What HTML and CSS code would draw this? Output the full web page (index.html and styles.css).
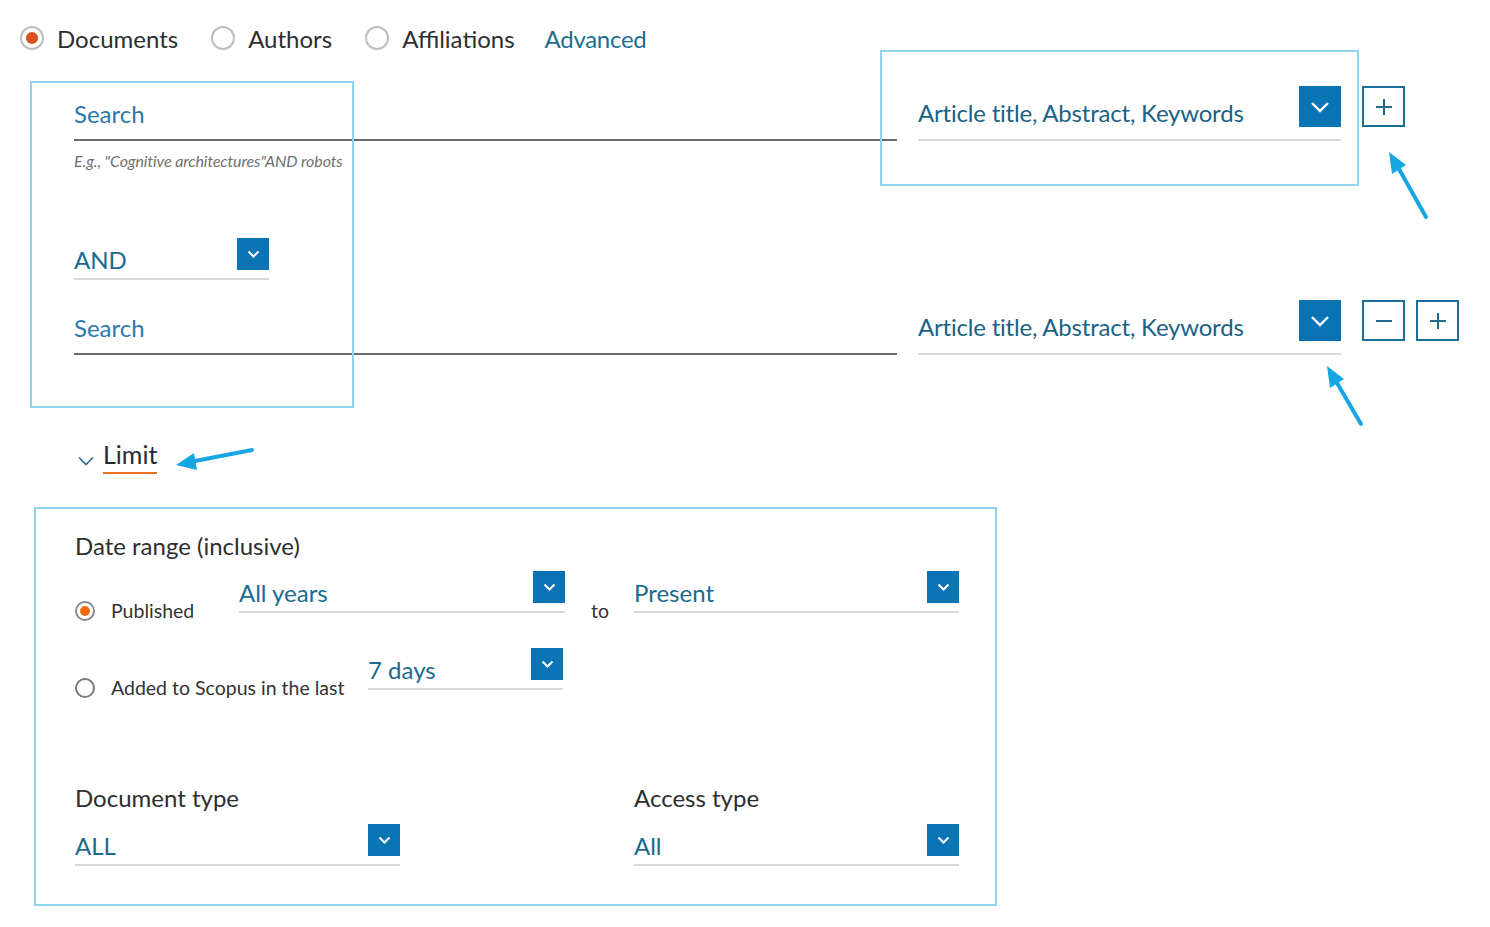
FILE: index.html
```html
<!DOCTYPE html>
<html lang="en">
<head>
  <meta charset="UTF-8">
  <title>Scopus - Document search</title>
  <link rel="stylesheet" href="styles.css">
</head>
<body>

<div class="page">
  <div class="nav">
    <label class="option"><span class="radio checked"></span>Documents</label>
    <label class="option"><span class="radio"></span>Authors</label>
    <label class="option"><span class="radio"></span>Affiliations</label>
    <a class="link">Advanced</a>
  </div>

  <div class="query">
    <div class="query-line">
      <div class="term">Search</div>
      <div class="select big field">
        <span class="value">Article title, Abstract, Keywords</span>
        <span class="caret"><svg width="20" height="12" viewBox="0 0 20 12"><polyline points="2,2 10,10 18,2"/></svg></span>
      </div>
      <div class="actions">
        <span class="btn"><svg width="18" height="18" viewBox="0 0 18 18"><path d="M9 1v16M1 9h16"/></svg></span>
      </div>
    </div>
    <div class="hint">E.g., "Cognitive architectures"AND robots</div>

    <div class="select small connector">
      <span class="value">AND</span>
      <span class="caret"><svg width="13" height="8" viewBox="0 0 13 8"><polyline points="1.5,1.5 6.5,6.5 11.5,1.5"/></svg></span>
    </div>

    <div class="query-line second">
      <div class="term">Search</div>
      <div class="select big field">
        <span class="value">Article title, Abstract, Keywords</span>
        <span class="caret"><svg width="20" height="12" viewBox="0 0 20 12"><polyline points="2,2 10,10 18,2"/></svg></span>
      </div>
      <div class="actions">
        <span class="btn"><svg width="18" height="18" viewBox="0 0 18 18"><path d="M1 9h16"/></svg></span>
        <span class="btn"><svg width="18" height="18" viewBox="0 0 18 18"><path d="M9 1v16M1 9h16"/></svg></span>
      </div>
    </div>
  </div>

  <div class="limit-toggle">
    <svg width="16" height="10" viewBox="0 0 16 10"><polyline points="1,1.5 8,8.5 15,1.5"/></svg>
    <span class="limit-label">Limit</span>
  </div>

  <div class="panel">
    <div class="panel-title">Date range (inclusive)</div>

    <div class="date-row">
      <label class="choice published"><span class="radio sm checked"></span>Published</label>
      <div class="select small w326">
        <span class="value">All years</span>
        <span class="caret"><svg width="13" height="8" viewBox="0 0 13 8"><polyline points="1.5,1.5 6.5,6.5 11.5,1.5"/></svg></span>
      </div>
      <span class="to">to</span>
      <div class="select small w325">
        <span class="value">Present</span>
        <span class="caret"><svg width="13" height="8" viewBox="0 0 13 8"><polyline points="1.5,1.5 6.5,6.5 11.5,1.5"/></svg></span>
      </div>
    </div>

    <div class="date-row added">
      <label class="choice last"><span class="radio sm"></span>Added to Scopus in the last</label>
      <div class="select small w195">
        <span class="value">7 days</span>
        <span class="caret"><svg width="13" height="8" viewBox="0 0 13 8"><polyline points="1.5,1.5 6.5,6.5 11.5,1.5"/></svg></span>
      </div>
    </div>

    <div class="type-grid">
      <div>
        <div class="panel-title">Document type</div>
        <div class="select small w325 typed">
          <span class="value">ALL</span>
          <span class="caret"><svg width="13" height="8" viewBox="0 0 13 8"><polyline points="1.5,1.5 6.5,6.5 11.5,1.5"/></svg></span>
        </div>
      </div>
      <div>
        <div class="panel-title">Access type</div>
        <div class="select small w325 typed">
          <span class="value">All</span>
          <span class="caret"><svg width="13" height="8" viewBox="0 0 13 8"><polyline points="1.5,1.5 6.5,6.5 11.5,1.5"/></svg></span>
        </div>
      </div>
    </div>
  </div>

  <!-- annotation marks drawn over the form -->
  <div class="mark mark-terms"></div>
  <div class="mark mark-field"></div>
  <svg class="arrows" width="1490" height="927" viewBox="0 0 1490 927">
    <line x1="1426" y1="217" x2="1399" y2="169"/>
    <polygon points="1389,152 1406,165 1392,174"/>
    <line x1="1361" y1="424" x2="1337" y2="383"/>
    <polygon points="1327,366 1344,379 1330,388"/>
    <line x1="252" y1="450" x2="195" y2="461"/>
    <polygon points="176,465 194,453 197,470"/>
  </svg>
</div>

</body>
</html>
```

FILE: styles.css
```css
body {
  margin: 0;
  font-family: 'Lato', 'Open Sans', sans-serif;
  color: #2e2e2e;
  background: white;
}
.page {
  position: relative;
  width: 1490px;
  height: 927px;
  overflow: hidden;
}
.nav {
  display: flex;
  align-items: center;
  height: 26px;
  margin: 25px 0 0 20px;
  font-size: 24px;
}
.option {
  display: flex;
  align-items: center;
  gap: 13px;
  margin-right: 33px;
}
.link {
  color: #1f6f92;
  margin-left: -3px;
  letter-spacing: -0.3px;
}
.radio {
  width: 24px;
  height: 24px;
  box-sizing: border-box;
  border: 2px solid #bdbdbd;
  border-radius: 50%;
  display: flex;
  align-items: center;
  justify-content: center;
}
.radio.checked::after {
  content: '';
  width: 12px;
  height: 12px;
  border-radius: 50%;
  background: #d9511c;
}
.radio.sm {
  width: 20px;
  height: 20px;
  border-color: #7a7a7a;
}
.radio.sm.checked {
  border-color: #8a8a8a;
}
.radio.sm.checked::after {
  width: 10px;
  height: 10px;
  background: #f26c0d;
}

.query {
  margin-left: 74px;
}
.query-line {
  display: flex;
  align-items: flex-end;
  margin-top: 35px;
}
.query-line.second {
  margin-top: 20px;
}
.term {
  width: 823px;
  font-size: 24px;
  line-height: 30px;
  padding-bottom: 10px;
  border-bottom: 2px solid #6b6b6b;
  color: #2b79ad;
}
.hint {
  margin-top: 10px;
  font-size: 16px;
  line-height: 20px;
  font-style: italic;
  color: #707070;
  letter-spacing: -0.1px;
}

.select {
  display: flex;
  align-items: flex-end;
  justify-content: space-between;
  box-sizing: border-box;
  border-bottom: 2px solid #d9d9d9;
}
.select .value {
  font-size: 24px;
  line-height: 30px;
  color: #1b6a8f;
  white-space: nowrap;
}
.field .value {
  color: #1a6284;
  letter-spacing: -0.2px;
}
.caret {
  display: flex;
  align-items: center;
  justify-content: center;
  background: #0b74b4;
}
.caret svg {
  fill: none;
  stroke: white;
  stroke-width: 2.4;
}
.select.big {
  padding-bottom: 11px;
}
.select.big .caret {
  width: 42px;
  height: 41px;
  margin-bottom: 1px;
}
.select.small {
  padding-bottom: 3px;
}
.select.small .caret {
  width: 32px;
  height: 32px;
  margin-bottom: 5px;
}
.select.small .caret svg {
  stroke-width: 2;
}
.field {
  width: 423px;
  margin-left: 21px;
}
.actions {
  display: flex;
  gap: 11px;
  margin-left: 21px;
  margin-bottom: 14px;
}
.btn {
  width: 43px;
  height: 41px;
  box-sizing: border-box;
  border: 2px solid #1c6f99;
  display: flex;
  align-items: center;
  justify-content: center;
}
.btn svg {
  fill: none;
  stroke: #24698b;
  stroke-width: 2;
}
.connector {
  width: 195px;
  margin-top: 67px;
}

.limit-toggle {
  display: flex;
  align-items: center;
  gap: 9px;
  margin: 86px 0 0 78px;
}
.limit-toggle svg {
  fill: none;
  stroke: #2a6a95;
  stroke-width: 1.6;
  margin-top: 6px;
}
.limit-label {
  font-size: 25px;
  line-height: 26px;
  padding-bottom: 5px;
  border-bottom: 2px solid #e8701a;
  color: #262b33;
}

.panel {
  width: 963px;
  box-sizing: border-box;
  margin: 33px 0 0 34px;
  padding: 22px 0 38px 39px;
  border: 2px solid #8fd3ee;
}
.panel-title {
  font-size: 24px;
  line-height: 30px;
  color: #2e2e2e;
}
.date-row {
  display: flex;
  align-items: flex-start;
  margin-top: 10px;
}
.date-row.added {
  margin-top: 25px;
}
.choice {
  display: flex;
  align-items: center;
  gap: 16px;
  margin-top: 28px;
  font-size: 19.5px;
  line-height: 24px;
  color: #333;
}
.choice.published {
  width: 164px;
}
.choice.last {
  width: 293px;
}
.to {
  width: 69px;
  box-sizing: border-box;
  padding-left: 26px;
  margin-top: 28px;
  font-size: 19.5px;
  line-height: 24px;
  color: #333;
}
.w326 { width: 326px; }
.w325 { width: 325px; }
.w195 { width: 195px; }
.type-grid {
  display: grid;
  grid-template-columns: 559px auto;
  margin-top: 83px;
}
.typed {
  margin-top: 11px;
}

.mark {
  position: absolute;
  box-sizing: border-box;
  border: 2px solid #8fd3ee;
}
.mark-terms {
  left: 30px;
  top: 81px;
  width: 324px;
  height: 327px;
}
.mark-field {
  left: 880px;
  top: 50px;
  width: 479px;
  height: 136px;
}
.arrows {
  position: absolute;
  left: 0;
  top: 0;
  pointer-events: none;
}
.arrows line {
  stroke: #17a6e4;
  stroke-width: 4;
  stroke-linecap: round;
}
.arrows polygon {
  fill: #17a6e4;
}
```
